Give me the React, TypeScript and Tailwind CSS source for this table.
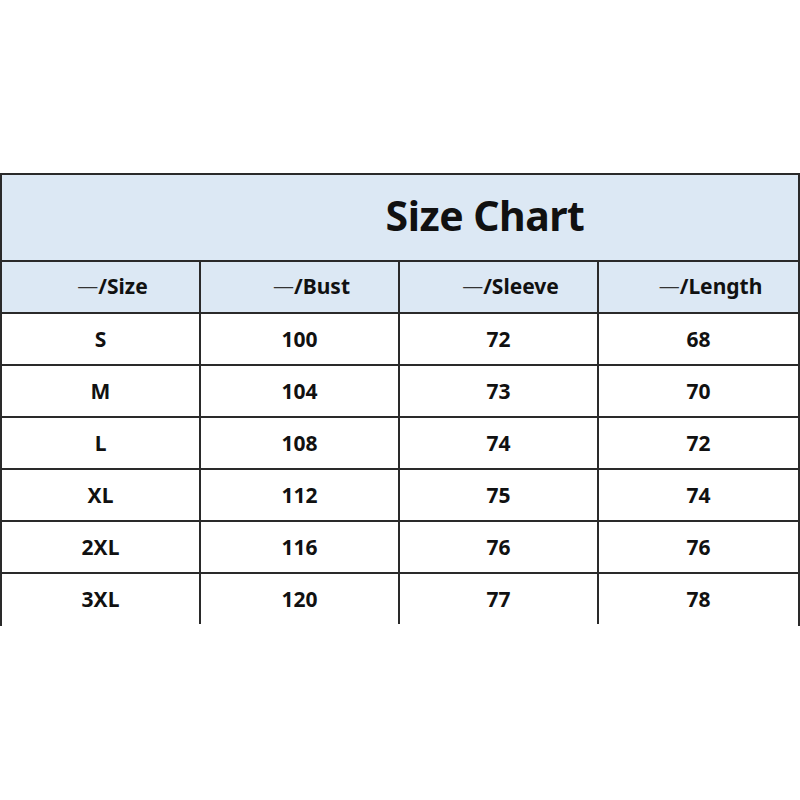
const headers = ["Size", "Bust", "Sleeve", "Length"];

const rows = [
  ["S", "100", "72", "68"],
  ["M", "104", "73", "70"],
  ["L", "108", "74", "72"],
  ["XL", "112", "75", "74"],
  ["2XL", "116", "76", "76"],
  ["3XL", "120", "77", "78"],
];

export default function App() {
  return (
    <div className="h-[800px] w-[800px] bg-white pt-[173px] font-['Noto_Sans','Open_Sans',sans-serif] text-[#111]">
      <div className="w-[800px] border-x-2 border-t-2 border-[#2a2a2a] pb-[2px]">
        {/* Title */}
        <div className="flex h-[85px] items-center justify-center bg-[#dce8f4] pb-1 pl-[170px]">
          <h1 className="text-[41px] font-bold leading-none tracking-[-0.5px]">Size Chart</h1>
        </div>

        {/* Header row */}
        <div className="grid grid-cols-4 border-t-2 border-[#2a2a2a] bg-[#dce8f4]">
          {headers.map((h, i) => (
            <div
              key={h}
              className={`flex h-[50px] items-center justify-center pl-6 text-[21px] font-bold ${
                i < 3 ? "border-r-2 border-[#2a2a2a]" : ""
              }`}
            >
              <span className="font-light text-[#333]">—</span>/{h}
            </div>
          ))}
        </div>

        {/* Data rows */}
        {rows.map((r) => (
          <div key={r[0]} className="grid grid-cols-4 border-t-2 border-[#2a2a2a] bg-white">
            {r.map((v, i) => (
              <div
                key={i}
                className={`flex h-[50px] items-center justify-center pt-0.5 text-[21px] font-bold ${
                  i < 3 ? "border-r-2 border-[#2a2a2a]" : ""
                }`}
              >
                {v}
              </div>
            ))}
          </div>
        ))}
      </div>
    </div>
  );
}
